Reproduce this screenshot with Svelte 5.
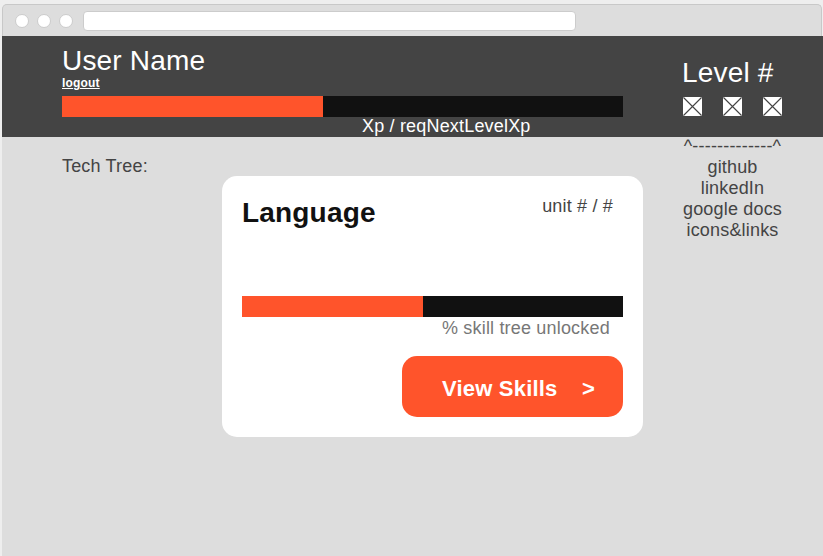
<script>
  const links = ['github', 'linkedIn', 'google docs', 'icons&links'];
  const xp = 261 / 561;
  const skills = 181 / 381;
</script>

<div class="page">
  <div class="browser">
    <div class="chrome">
      <i class="dot"></i><i class="dot"></i><i class="dot"></i>
      <div class="address"></div>
    </div>
    <header>
      <div class="user">
        <div class="title">User Name</div>
        <a class="logout" href="#logout">logout</a>
        <div class="bar"><div class="fill" style="width: {xp * 100}%"></div></div>
        <div class="xp">Xp / reqNextLevelXp</div>
      </div>
      <div class="level">
        <div class="title">Level #</div>
        <div class="icons">
          {#each [0, 1, 2] as n (n)}
            <svg width="21" height="21" viewBox="0 0 21 21">
              <rect x="1" y="1" width="19" height="19" rx="1" fill="#fff" />
              <path d="M1.5 1.5L19.5 19.5M19.5 1.5L1.5 19.5" stroke="#444" stroke-width="1.1" />
            </svg>
          {/each}
        </div>
      </div>
    </header>
    <main>
      <div class="tree">Tech Tree:</div>
      <section class="card">
        <div class="head">
          <h2>Language</h2>
          <span class="unit">unit # / #</span>
        </div>
        <div class="bar"><div class="fill" style="width: {skills * 100}%"></div></div>
        <div class="unlocked">% skill tree unlocked</div>
        <button><span>View Skills</span><span>&gt;</span></button>
      </section>
      <div class="links">
        <div>^-------------^</div>
        {#each links as link (link)}
          <div>{link}</div>
        {/each}
      </div>
    </main>
  </div>
</div>

<style>
  .page {
    box-sizing: border-box;
    width: 823px;
    height: 556px;
    padding: 4px 0 0 2px;
    overflow: hidden;
    background: #eee;
    font: 18px/21px "Liberation Sans", Arial, sans-serif;
    letter-spacing: 0.18px;
    color: #444;
    white-space: nowrap;
  }
  .browser {
    height: 552px;
    display: flex;
    flex-direction: column;
  }
  .chrome {
    box-sizing: border-box;
    width: 820px;
    height: 32px;
    display: flex;
    align-items: center;
    padding: 1px 0 0 12px;
    border: 1px solid #c8c8c8;
    border-bottom: 0;
    border-radius: 5px 5px 0 0;
    background: #ddd;
  }
  .dot {
    box-sizing: border-box;
    width: 14px;
    height: 14px;
    margin-right: 8px;
    border: 1px solid #ccc;
    border-radius: 50%;
    background: #fff;
  }
  .address {
    box-sizing: border-box;
    width: 493px;
    height: 20px;
    margin-left: 2px;
    border: 1px solid #ccc;
    border-radius: 4px;
    background: #fff;
  }
  header {
    box-sizing: border-box;
    height: 101px;
    display: flex;
    padding-left: 60px;
    background: #444;
    color: #fff;
  }
  .user {
    width: 561px;
    display: flex;
    flex-direction: column;
    align-items: flex-start;
    padding-top: 8px;
  }
  .title {
    font-size: 28px;
    line-height: 30px;
    padding-top: 2px;
  }
  .logout {
    font-size: 12px;
    line-height: 14px;
    margin-bottom: 6px;
    color: #fff;
    font-weight: bold;
  }
  .bar {
    width: 100%;
    height: 21px;
    flex: none;
    background: #111;
  }
  .fill {
    height: 100%;
    background: #ff542b;
  }
  .xp {
    line-height: 18px;
    margin-left: 300px;
  }
  .level {
    margin-left: 59px;
    padding-top: 20px;
  }
  .icons {
    display: flex;
    gap: 19px;
    padding-top: 8px;
  }
  main {
    flex: 1;
    display: flex;
    align-items: flex-start;
    padding-left: 60px;
    background: #ddd;
  }
  .tree {
    width: 160px;
    padding-top: 19px;
  }
  .card {
    box-sizing: border-box;
    width: 421px;
    height: 261px;
    margin-top: 39px;
    padding: 20px;
    border-radius: 15px;
    background: #fff;
  }
  .head {
    height: 100px;
    display: flex;
    justify-content: space-between;
    align-items: flex-start;
  }
  h2 {
    margin: 0;
    color: #111;
    font-size: 28px;
    line-height: 33px;
  }
  .unit {
    margin-right: 10px;
  }
  .unlocked {
    margin-left: 200px;
    padding-top: 1px;
    color: #777;
  }
  button {
    width: 221px;
    height: 61px;
    margin: 17px 0 0 160px;
    padding: 4px 28px 0 40px;
    display: flex;
    align-items: center;
    justify-content: space-between;
    border: 0;
    border-radius: 15px;
    background: #ff542b;
    color: #fff;
    font: bold 22px/25px "Liberation Sans", Arial, sans-serif;
    letter-spacing: 0.2px;
  }
  .links {
    width: 101px;
    margin: -1px 0 0 39px;
    display: flex;
    flex-direction: column;
    align-items: center;
  }
</style>
